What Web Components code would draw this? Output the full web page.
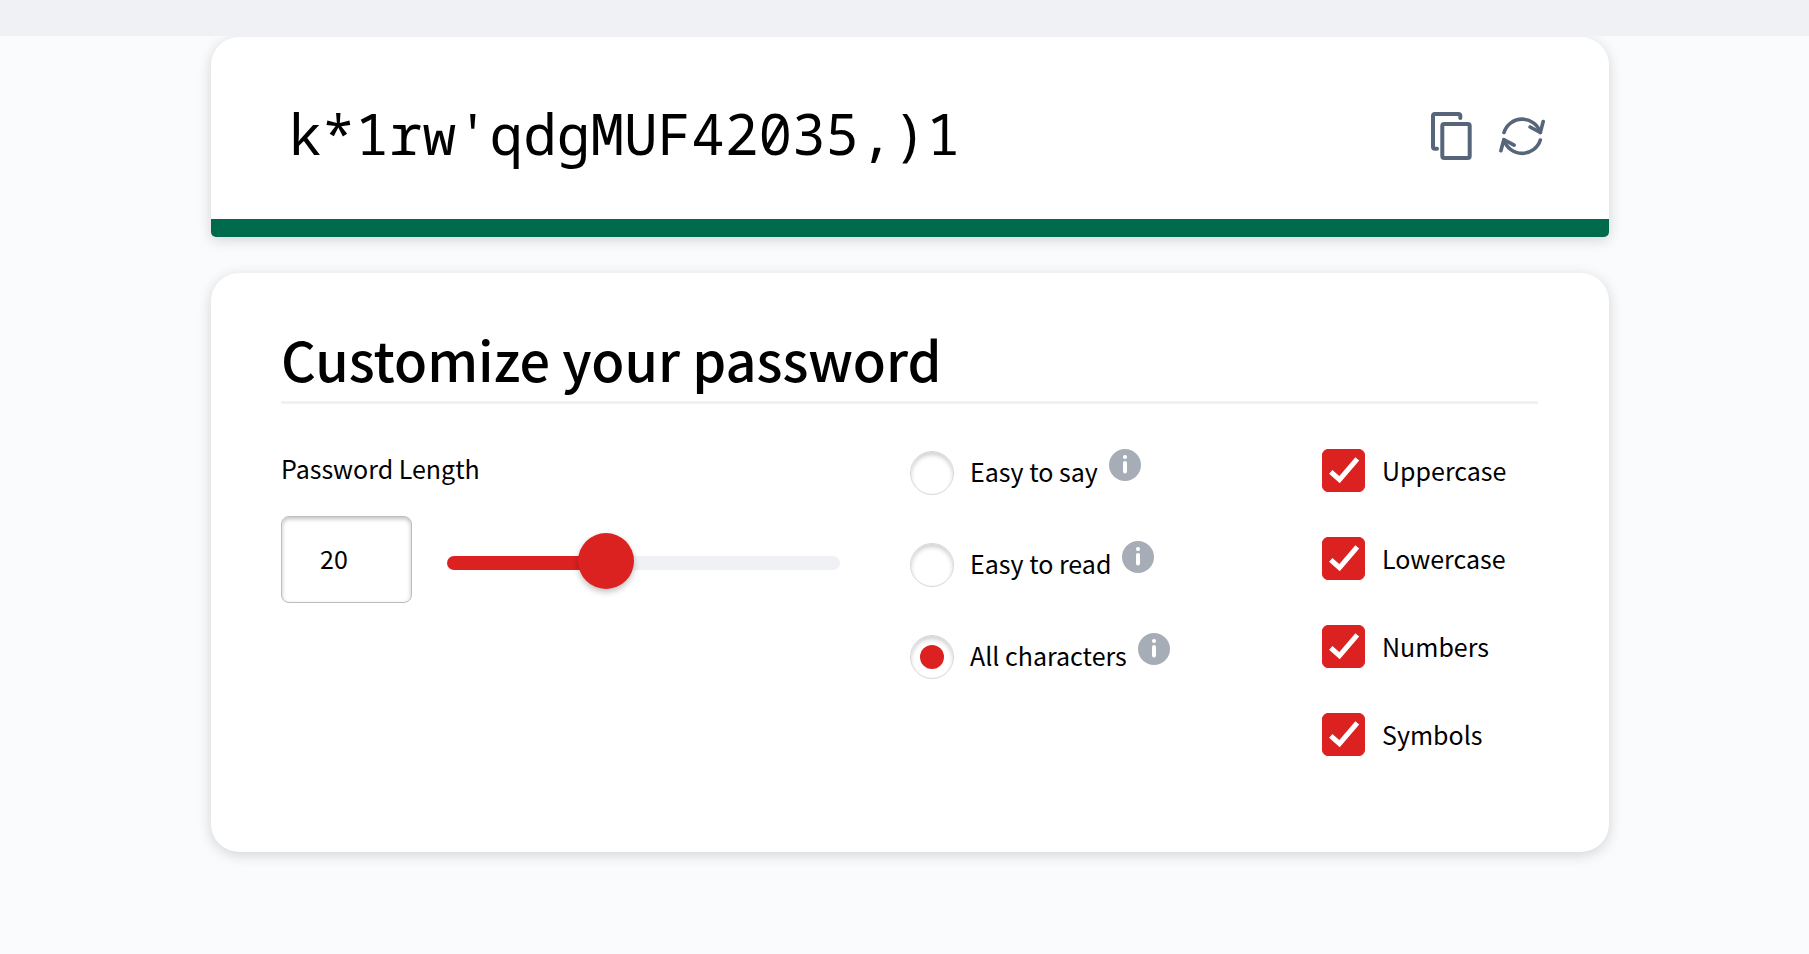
<!DOCTYPE html>
<html lang="en">
<head>
<meta charset="utf-8">
<meta name="viewport" content="width=device-width, initial-scale=1">
<title>Password Generator</title>
<style>
  :root {
    --color-red: #dc2121;
    --color-green: #006b4c;
    --color-icon: #56657a;
    --color-line: #f0f1f4;
    --color-info: #a6adb6;
    --font-body: "Source Sans Pro", "Noto Sans CJK SC", "Open Sans", sans-serif;
    --font-mono: Consolas, "Noto Sans Mono", "DejaVu Sans Mono", monospace;
    --shadow-card: 0 3px 14px rgba(0, 0, 0, 0.16);
  }

  body {
    margin: 0;
    background: #fafbfd;
    color: #000;
    font-family: var(--font-body);
    font-size: 25px;
    line-height: 36px;
  }
</style>
</head>
<body>
<password-page>
  <password-display slot="display" value="k*1rw'qdgMUF42035,)1"></password-display>
  <options-card heading="Customize your password">
    <length-field label="Password Length" min="1" max="50" value="20"></length-field>
    <radio-list name="style" selected="all">
      <option value="say">Easy to say</option>
      <option value="read">Easy to read</option>
      <option value="all">All characters</option>
    </radio-list>
    <check-list>
      <check-option name="upper">Uppercase</check-option>
      <check-option name="lower">Lowercase</check-option>
      <check-option name="numbers">Numbers</check-option>
      <check-option name="symbols">Symbols</check-option>
    </check-list>
  </options-card>
</password-page>

<script>
class PasswordPage extends HTMLElement {
  constructor() {
    super();
    this.attachShadow({ mode: 'open' });
  }

  connectedCallback() {
    this.render();
    this.addEventListener('options-changed', () => this.generate());
    this.addEventListener('refresh-password', () => this.generate());
  }

  generate() {
    const sets = {
      upper: 'ABCDEFGHJKLMNPQRSTUVWXYZ',
      lower: 'abcdefghijkmnopqrstuvwxyz',
      numbers: '0123456789',
      symbols: "!*'(),.#$%&"
    };
    let chars = '';
    this.querySelectorAll('check-option').forEach(option => {
      if (option.checked) chars += sets[option.getAttribute('name')];
    });
    if (!chars) return;

    let password = '';
    const length = this.querySelector('length-field').getValue();
    for (let i = 0; i < length; i++) {
      password += chars[Math.floor(Math.random() * chars.length)];
    }
    this.querySelector('password-display').setValue(password);
  }

  render() {
    this.shadowRoot.innerHTML = `
      <style>
        :host {
          display: block;
        }

        /* sits above the card shadow */
        .band {
          position: relative;
          z-index: 1;
          height: 36px;
          background: #f0f1f5;
        }

        main {
          display: flex;
          flex-direction: column;
          gap: 36px;
          padding: 1px 200px 40px 211px;
        }
      </style>

      <div class="band"></div>
      <main>
        <slot name="display"></slot>
        <slot></slot>
      </main>
    `;
  }
}

class PasswordDisplay extends HTMLElement {
  constructor() {
    super();
    this.attachShadow({ mode: 'open' });
  }

  connectedCallback() {
    this.render();
    const [copy, refresh] = this.shadowRoot.querySelectorAll('button');
    copy.addEventListener('click', () => {
      const input = this.shadowRoot.querySelector('input');
      if (navigator.clipboard) navigator.clipboard.writeText(input.value);
    });
    refresh.addEventListener('click', () => {
      this.dispatchEvent(new CustomEvent('refresh-password', { bubbles: true }));
    });
  }

  setValue(value) {
    this.shadowRoot.querySelector('input').value = value;
  }

  render() {
    this.shadowRoot.innerHTML = `
      <style>
        :host {
          display: block;
          background: #fff;
          border-radius: 28px 28px 5px 5px;
          box-shadow: var(--shadow-card);
          overflow: hidden;
        }

        .row {
          display: flex;
          align-items: center;
          gap: 27px;
          padding: 64px 64px 48px 77px;
        }

        input {
          box-sizing: border-box;
          flex: 1;
          min-width: 0;
          height: 70px;
          padding: 0 0 6px;
          border: none;
          outline: none;
          background: none;
          color: #000;
          font-family: var(--font-mono);
          font-size: 56px;
          line-height: 64px;
        }

        button {
          display: flex;
          padding: 0;
          border: none;
          background: none;
          color: var(--color-icon);
          cursor: pointer;
        }

        svg {
          fill: none;
          stroke: currentColor;
          stroke-linecap: round;
          stroke-linejoin: round;
        }

        .strength {
          height: 18px;
          background: var(--color-green);
        }
      </style>

      <div class="row">
        <input type="text" readonly aria-label="Generated password">
        <button type="button" aria-label="Copy password">
          <svg width="41" height="48" viewBox="0 0 41 48" stroke-width="4">
            <rect x="11.3" y="12" width="27.4" height="34" rx="2"/>
            <path d="M29.3 6V4a2 2 0 0 0-2-2H4a2 2 0 0 0-2 2v30.7a2 2 0 0 0 2 2h2"/>
          </svg>
        </button>
        <button type="button" aria-label="Generate a new password">
          <svg width="46" height="42" viewBox="0 0 46 42" stroke-width="3.6">
            <path d="M5 17.5a19 19 0 0 1 36.3 0"/>
            <path d="M44.2 6.5l-2.9 11-10.2-5.5"/>
            <path d="M41.3 25a19 19 0 0 1-36.3 0"/>
            <path d="M1.9 35.7l2.9-11 10.3 5.5"/>
          </svg>
        </button>
      </div>
      <div class="strength"></div>
    `;
    this.setValue(this.getAttribute('value') || '');
  }
}

class OptionsCard extends HTMLElement {
  constructor() {
    super();
    this.attachShadow({ mode: 'open' });
  }

  connectedCallback() {
    this.shadowRoot.innerHTML = `
      <style>
        :host {
          display: block;
          padding: 48px 71px 96px 70px;
          background: #fff;
          border-radius: 28px;
          box-shadow: var(--shadow-card);
        }

        h2 {
          margin: 0 0 45px;
          padding-bottom: 4px;
          border-bottom: 3px solid var(--color-line);
          font-size: 54px;
          font-weight: 500;
          line-height: 76px;
        }

        /* length / style / character columns */
        form {
          display: grid;
          grid-template-columns: 629fr 412fr 216fr;
          align-items: start;
        }
      </style>

      <h2>${this.getAttribute('heading')}</h2>
      <form>
        <slot></slot>
      </form>
    `;
  }
}

class LengthField extends HTMLElement {
  constructor() {
    super();
    this.attachShadow({ mode: 'open' });
    this.min = parseInt(this.getAttribute('min')) || 1;
    this.max = parseInt(this.getAttribute('max')) || 50;
    this.value = parseInt(this.getAttribute('value')) || this.min;
  }

  connectedCallback() {
    this.render();
    this.shadowRoot.querySelectorAll('input').forEach(input => {
      input.addEventListener('input', e => this.handleInput(e.target.value));
    });
  }

  getValue() {
    return this.value;
  }

  handleInput(value) {
    this.value = Math.min(this.max, Math.max(this.min, parseInt(value) || this.min));
    this.shadowRoot.querySelector('#length').value = this.value;
    this.shadowRoot.querySelector('#slider').value = this.value;
    this.updateFill();
    this.dispatchEvent(new CustomEvent('options-changed', { bubbles: true }));
  }

  updateFill() {
    const percent = (this.value - this.min) / (this.max - this.min) * 100;
    this.style.setProperty('--fill', `${percent}%`);
  }

  render() {
    this.shadowRoot.innerHTML = `
      <style>
        :host {
          display: block;
          padding-right: 70px;
        }

        label {
          display: block;
          margin-bottom: 29px;
          line-height: 38px;
        }

        .controls {
          display: flex;
          align-items: center;
          gap: 35px;
        }

        #length {
          box-sizing: border-box;
          width: 131px;
          height: 87px;
          padding: 0 38px 4px;
          border: 1px solid #bdbdbd;
          border-radius: 8px;
          box-shadow: inset 0 2px 4px rgba(0, 0, 0, 0.25);
          background: #fff;
          color: #000;
          font: inherit;
        }

        #slider {
          -webkit-appearance: none;
          appearance: none;
          flex: 1;
          min-width: 0;
          height: 56px;
          margin: 6px 0 0;
          background: none;
          cursor: pointer;
        }

        #slider::-webkit-slider-runnable-track {
          height: 14px;
          border-radius: 7px;
          background: linear-gradient(to right, var(--color-red) var(--fill), var(--color-line) var(--fill));
        }

        #slider::-webkit-slider-thumb {
          -webkit-appearance: none;
          width: 56px;
          height: 56px;
          margin-top: -23px;
          border-radius: 50%;
          background: var(--color-red);
          box-shadow: 0 3px 6px rgba(0, 0, 0, 0.25);
        }
      </style>

      <label for="length">${this.getAttribute('label')}</label>
      <div class="controls">
        <input id="length" type="text" inputmode="numeric" value="${this.value}">
        <input id="slider" type="range" aria-label="${this.getAttribute('label')}"
          min="${this.min}" max="${this.max}" value="${this.value}">
      </div>
    `;
    this.updateFill();
  }
}

class InfoButton extends HTMLElement {
  constructor() {
    super();
    this.attachShadow({ mode: 'open' });
  }

  connectedCallback() {
    this.shadowRoot.innerHTML = `
      <style>
        :host {
          display: block;
        }

        button {
          display: flex;
          padding: 0;
          border: none;
          background: none;
          color: var(--color-info);
          cursor: pointer;
        }
      </style>

      <button type="button" aria-label="About ${this.getAttribute('topic')}">
        <svg width="32" height="32" viewBox="0 0 32 32">
          <circle cx="16" cy="16" r="16" fill="currentColor"/>
          <circle cx="16" cy="8" r="2.1" fill="#fff"/>
          <rect x="14" y="12" width="4" height="12.5" rx="2" fill="#fff"/>
        </svg>
      </button>
    `;
  }
}

// All radios live in one shadow root so that the browser groups them by name
class RadioList extends HTMLElement {
  constructor() {
    super();
    this.attachShadow({ mode: 'open' });
  }

  connectedCallback() {
    const name = this.getAttribute('name');
    const selected = this.getAttribute('selected');
    const rows = [...this.querySelectorAll('option')].map(option => `
      <div class="row">
        <input type="radio" id="${option.value}" name="${name}" value="${option.value}"
          ${option.value === selected ? 'checked' : ''}>
        <label for="${option.value}">${option.textContent}</label>
        <info-button topic="${option.textContent}"></info-button>
      </div>
    `);

    this.shadowRoot.innerHTML = `
      <style>
        :host {
          display: flex;
          flex-direction: column;
          gap: 48px;
          padding-top: 2px;
        }

        .row {
          display: flex;
          align-items: center;
          height: 44px;
        }

        input {
          -webkit-appearance: none;
          appearance: none;
          flex: none;
          display: grid;
          place-items: center;
          width: 44px;
          height: 44px;
          margin: 0 16px 0 0;
          border: 1px solid #d8d8d8;
          border-radius: 50%;
          box-shadow: inset 0 3px 4px rgba(0, 0, 0, 0.18);
          background: #fff;
        }

        input:checked::before {
          content: "";
          width: 24px;
          height: 24px;
          border-radius: 50%;
          background: var(--color-red);
        }

        label {
          margin-right: 11px;
          padding-bottom: 5px;
        }

        info-button {
          align-self: flex-start;
          margin-top: -2px;
        }
      </style>
      ${rows.join('')}
    `;
  }
}

class CheckList extends HTMLElement {
  constructor() {
    super();
    this.attachShadow({ mode: 'open' });
  }

  connectedCallback() {
    this.shadowRoot.innerHTML = `
      <style>
        :host {
          display: flex;
          flex-direction: column;
          gap: 45px;
        }
      </style>
      <slot></slot>
    `;
  }
}

class CheckOption extends HTMLElement {
  constructor() {
    super();
    this.attachShadow({ mode: 'open' });
  }

  get checked() {
    return this.shadowRoot.querySelector('input').checked;
  }

  connectedCallback() {
    this.render();
    this.shadowRoot.querySelector('input').addEventListener('change', () => {
      this.dispatchEvent(new CustomEvent('options-changed', { bubbles: true }));
    });
  }

  render() {
    this.shadowRoot.innerHTML = `
      <style>
        :host {
          display: block;
        }

        label {
          display: flex;
          align-items: center;
          gap: 17px;
        }

        .box {
          display: grid;
          flex: none;
        }

        .text {
          padding-bottom: 2px;
        }

        input, svg {
          grid-area: 1 / 1;
          width: 43px;
          height: 43px;
          margin: 0;
        }

        input {
          -webkit-appearance: none;
          appearance: none;
          border: 1px solid #c9c9c9;
          border-radius: 6px;
          background: #fff;
        }

        input:checked {
          border-color: var(--color-red);
          background: var(--color-red);
        }

        svg {
          fill: none;
          stroke: #fff;
          stroke-width: 5;
          pointer-events: none;
        }
      </style>

      <label>
        <span class="box">
          <input type="checkbox" name="${this.getAttribute('name')}" checked>
          <svg viewBox="0 0 43 43"><path d="M8.8 22.8l8.7 7.8L35.3 9.8"/></svg>
        </span>
        <span class="text"><slot></slot></span>
      </label>
    `;
  }
}

customElements.define('info-button', InfoButton);
customElements.define('check-option', CheckOption);
customElements.define('check-list', CheckList);
customElements.define('radio-list', RadioList);
customElements.define('length-field', LengthField);
customElements.define('options-card', OptionsCard);
customElements.define('password-display', PasswordDisplay);
customElements.define('password-page', PasswordPage);
</script>
</body>
</html>
